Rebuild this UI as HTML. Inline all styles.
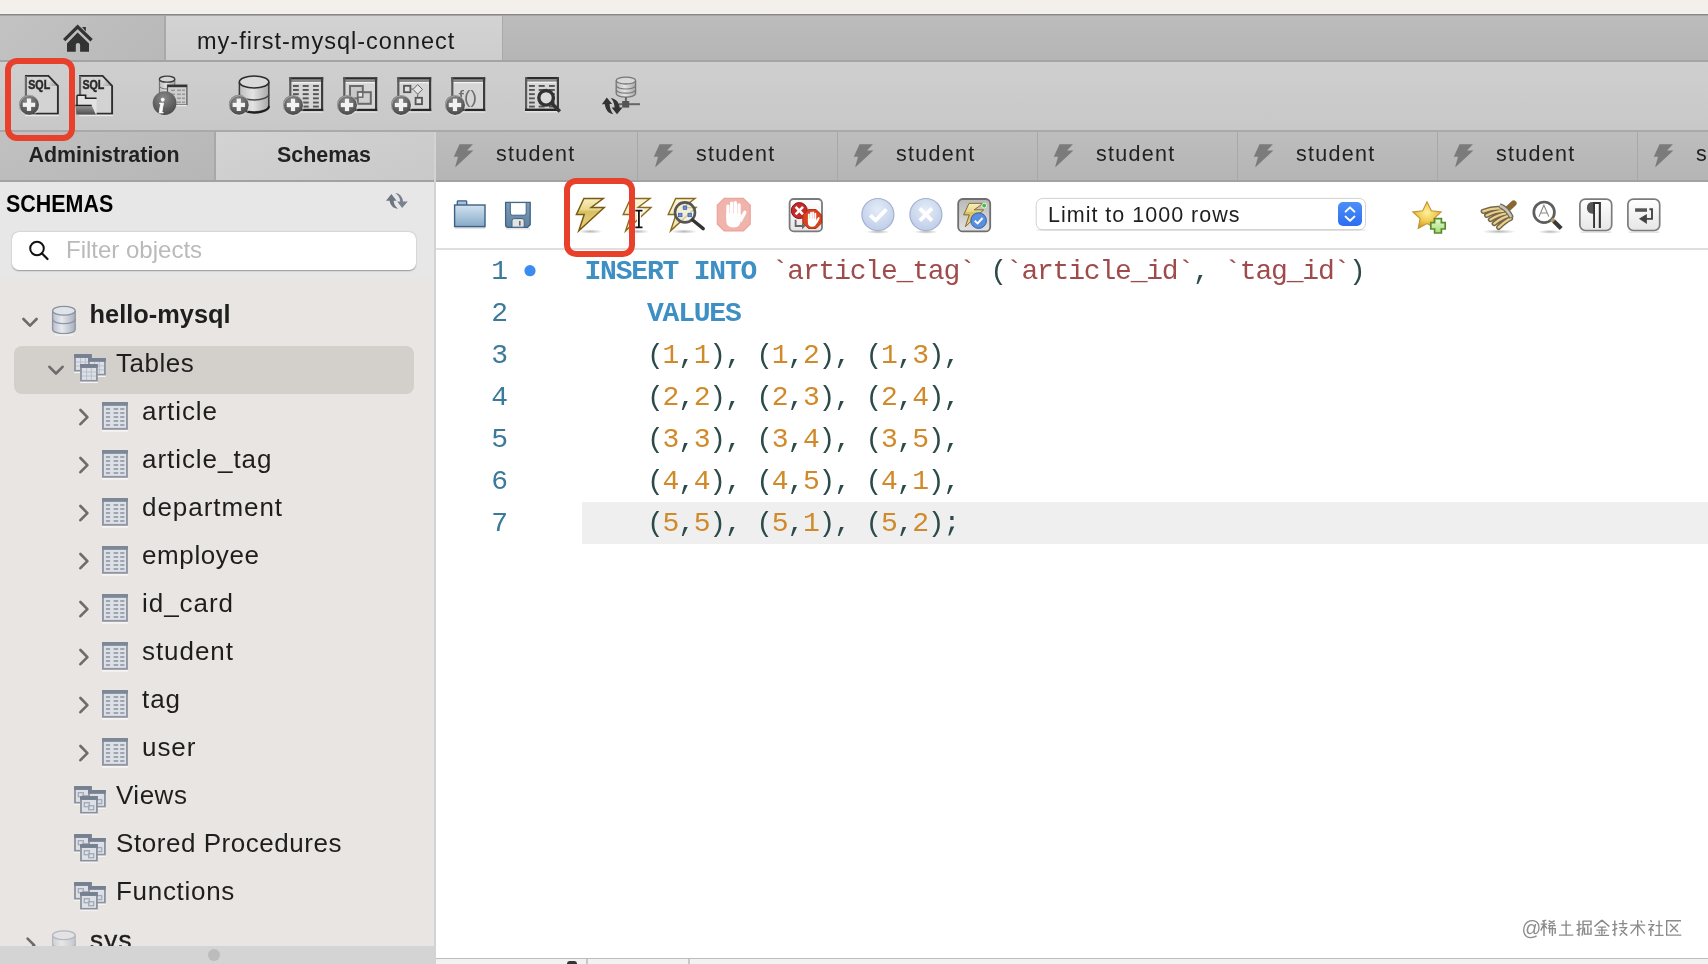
<!DOCTYPE html>
<html><head><meta charset="utf-8">
<style>
*{margin:0;padding:0;box-sizing:border-box}
html,body{width:1708px;height:964px;overflow:hidden;background:#fff;font-family:"Liberation Sans",sans-serif;color:#1f1f1f}
.a{position:absolute}
#top{left:0;top:0;width:1708px;height:14px;background:linear-gradient(#f3f0eb 92%,#f9f7f3)}
#l1{left:0;top:14px;width:1708px;height:2px;background:linear-gradient(#868686 50%,#a6a6a6 50%)}
#tabbar{left:0;top:16px;width:1708px;height:44px;background:linear-gradient(#bcbcbc,#b5b5b5)}
#hometab{left:0;top:16px;width:164px;height:44px;background:linear-gradient(135deg,#c3c3c3,#b8b8b8)}
#hsep{left:164px;top:16px;width:2px;height:44px;background:#a9a9a9}
#conntab{left:166px;top:16px;width:336px;height:44px;background:linear-gradient(#d3d3d3,#cdcdcd)}
#csep{left:502px;top:16px;width:1px;height:44px;background:#a9a9a9}
#conntxt{left:197px;top:27px;line-height:28px;font-size:23.5px;letter-spacing:1px;color:#1a1a1a}
#l2{left:0;top:60px;width:1708px;height:2px;background:#a4a4a4}
#toolbar{left:0;top:62px;width:1708px;height:68px;background:linear-gradient(#cfcfcf,#c8c8c8)}
#l3{left:0;top:130px;width:1708px;height:2px;background:#a9a9a9}
#admintab{left:0;top:132px;width:214px;height:48px;background:linear-gradient(160deg,#c1c1c1,#b6b6b6)}
#asep{left:214px;top:132px;width:2px;height:48px;background:#a8a8a8}
#schtab{left:216px;top:132px;width:218px;height:48px;background:linear-gradient(160deg,#d3d3d3,#c9c9c9)}
.tabtxt{font-weight:bold;font-size:21.4px;line-height:47px;text-align:center;color:#222}
#edtabs{left:436px;top:132px;width:1272px;height:48px;background:linear-gradient(#bdbdbd,#b5b5b5)}
.etab{position:absolute;top:0;width:202px;height:48px;border-right:1.5px solid #a8a8a8}
.etab span{position:absolute;left:60px;top:0;line-height:44px;font-size:21.5px;letter-spacing:1.3px;color:#222}
.etab svg{position:absolute;left:16px;top:13px}
#l4{left:0;top:180px;width:1708px;height:2px;background:#a2a2a2}
#vsplit{left:434px;top:132px;width:2px;height:832px;background:#d3d3d3}
#lefthead{left:0;top:182px;width:434px;height:97px;background:#e7e7e7}
#schemas{left:6px;top:191px;font-weight:bold;font-size:23.7px;color:#000;transform:scaleX(0.905);transform-origin:0 0}
#filter{left:12px;top:232px;width:404px;height:38px;background:#fff;border-radius:7px;box-shadow:0 0.5px 1.5px rgba(0,0,0,.35)}
#filtxt{left:66px;top:236px;font-size:24px;color:#bababa}
#tree{left:0;top:278px;width:434px;height:668px;background:#e9e5e2}
#selrow{left:14px;top:346px;width:400px;height:48px;border-radius:8px;background:#d3cfcb}
.ti{position:absolute;font-size:26px;letter-spacing:0.95px;color:#1e1e1e;white-space:nowrap}
#hbar{left:0;top:946px;width:434px;height:18px;background:#d4d4d4}
#edtool{left:436px;top:182px;width:1272px;height:66px;background:#fff}
#l5{left:436px;top:248px;width:1272px;height:2px;background:#dfdfdf}
#editor{left:436px;top:250px;width:1272px;height:708px;background:#fff}
#curline{left:582px;top:502px;width:1126px;height:42px;background:#efefef}
.ln{position:absolute;left:436px;width:72px;text-align:right;font-family:"Liberation Mono",monospace;font-size:28px;color:#3b7a9a}
.code{position:absolute;left:584.5px;font-family:"Liberation Mono",monospace;font-size:28px;letter-spacing:-1.2px;white-space:pre;color:#2b4a4a}
.kw{color:#3d8fc4;font-weight:bold}
.st{color:#a04b4b}
.nu{color:#d08a2a}
#botline{left:436px;top:958px;width:1272px;height:1px;background:#bdbdbd}
#bot{left:436px;top:959px;width:1272px;height:5px;background:#f2f2f2}
.red{position:absolute;border:6px solid #e8412b;border-radius:12px}
</style></head><body style="will-change:transform">
<div class="a" id="top"></div>
<div class="a" id="l1"></div>
<div class="a" id="tabbar"></div>
<div class="a" id="hometab"></div>
<div class="a" id="hsep"></div>
<div class="a" id="conntab"></div>
<div class="a" id="csep"></div>
<div class="a" id="conntxt">my-first-mysql-connect</div>
<div class="a" id="l2"></div>
<div class="a" id="toolbar"></div>
<div class="a" id="l3"></div>
<div class="a" id="admintab"><div class="tabtxt" style="padding-right:6px">Administration</div></div>
<div class="a" id="asep"></div>
<div class="a" id="schtab"><div class="tabtxt" style="padding-right:2px">Schemas</div></div>
<div class="a" id="edtabs">
 <div class="etab" style="left:0px"><span>student</span></div>
 <div class="etab" style="left:200px"><span>student</span></div>
 <div class="etab" style="left:400px"><span>student</span></div>
 <div class="etab" style="left:600px"><span>student</span></div>
 <div class="etab" style="left:800px"><span>student</span></div>
 <div class="etab" style="left:1000px"><span>student</span></div>
 <div class="etab" style="left:1200px"><span>student</span></div>
</div>
<div class="a" id="l4"></div>
<div class="a" id="lefthead"></div>
<div class="a" id="schemas">SCHEMAS</div>
<div class="a" id="filter"></div>
<div class="a" id="filtxt">Filter objects</div>
<div class="a" id="tree"></div>
<div class="a" id="selrow"></div>
<div class="ti" style="left:90px;top:298px;font-weight:bold;font-size:25.4px;letter-spacing:0;left:89.5px;top:300px">hello-mysql</div>
<div class="ti" style="left:116px;top:348px;letter-spacing:0.5px">Tables</div>
<div class="ti" style="left:142px;top:396px">article</div>
<div class="ti" style="left:142px;top:444px">article_tag</div>
<div class="ti" style="left:142px;top:492px">department</div>
<div class="ti" style="left:142px;top:540px;letter-spacing:0.6px">employee</div>
<div class="ti" style="left:142px;top:588px">id_card</div>
<div class="ti" style="left:142px;top:636px">student</div>
<div class="ti" style="left:142px;top:684px">tag</div>
<div class="ti" style="left:142px;top:732px">user</div>
<div class="ti" style="left:116px;top:780px;letter-spacing:0.5px">Views</div>
<div class="ti" style="left:116px;top:828px;letter-spacing:0.55px">Stored Procedures</div>
<div class="ti" style="left:116px;top:876px;letter-spacing:0.7px">Functions</div>
<div class="ti" style="left:90px;top:925px;letter-spacing:1.2px;-webkit-text-stroke:0.4px #1e1e1e">sys</div>
<div class="a" id="hbar"></div>
<div class="a" id="vsplit"></div>
<div class="a" id="edtool"></div>
<div class="a" id="l5"></div>
<div class="a" id="editor"></div>
<div class="a" id="curline"></div>
<div class="ln" style="top:256px">1</div>
<div class="ln" style="top:298px">2</div>
<div class="ln" style="top:340px">3</div>
<div class="ln" style="top:382px">4</div>
<div class="ln" style="top:424px">5</div>
<div class="ln" style="top:466px">6</div>
<div class="ln" style="top:508px">7</div>
<div class="code" style="top:256px"><span class="kw">INSERT INTO</span> <span class="st">`article_tag`</span> (<span class="st">`article_id`</span>, <span class="st">`tag_id`</span>)</div>
<div class="code" style="top:298px">    <span class="kw">VALUES</span></div>
<div class="code" style="top:340px">    (<span class="nu">1</span>,<span class="nu">1</span>), (<span class="nu">1</span>,<span class="nu">2</span>), (<span class="nu">1</span>,<span class="nu">3</span>),</div>
<div class="code" style="top:382px">    (<span class="nu">2</span>,<span class="nu">2</span>), (<span class="nu">2</span>,<span class="nu">3</span>), (<span class="nu">2</span>,<span class="nu">4</span>),</div>
<div class="code" style="top:424px">    (<span class="nu">3</span>,<span class="nu">3</span>), (<span class="nu">3</span>,<span class="nu">4</span>), (<span class="nu">3</span>,<span class="nu">5</span>),</div>
<div class="code" style="top:466px">    (<span class="nu">4</span>,<span class="nu">4</span>), (<span class="nu">4</span>,<span class="nu">5</span>), (<span class="nu">4</span>,<span class="nu">1</span>),</div>
<div class="code" style="top:508px">    (<span class="nu">5</span>,<span class="nu">5</span>), (<span class="nu">5</span>,<span class="nu">1</span>), (<span class="nu">5</span>,<span class="nu">2</span>);</div>
<div class="a" id="botline"></div>
<div class="a" id="bot"></div>
<div class="a" style="left:586px;top:959px;width:2px;height:5px;background:#c8c8c8"></div>
<div class="a" style="left:688px;top:959px;width:2px;height:5px;background:#c8c8c8"></div>
<div class="a" style="left:567px;top:961px;width:10px;height:6px;border-radius:5px;background:#333"></div>
<div class="a" style="left:208px;top:949px;width:12px;height:12px;border-radius:6px;background:#bcbcbc"></div>
<svg class="a" style="left:0;top:0" width="1708" height="964" viewBox="0 0 1708 964">
<defs>
 <radialGradient id="gPlus" cx="0.45" cy="0.3" r="0.7"><stop offset="0" stop-color="#8a8a8a"/><stop offset="1" stop-color="#4a4a4a"/></radialGradient>
 <linearGradient id="gCyl" x1="0" y1="0" x2="1" y2="0"><stop offset="0" stop-color="#bdbdbd"/><stop offset="0.45" stop-color="#e4e4e4"/><stop offset="1" stop-color="#a8a8a8"/></linearGradient>
 <linearGradient id="gFold" x1="0" y1="0" x2="1" y2="1"><stop offset="0" stop-color="#f0f0f0"/><stop offset="1" stop-color="#9a9a9a"/></linearGradient>
 <g id="plus"><circle r="10" fill="url(#gPlus)"/><circle r="10" fill="none" stroke="#e6e6e6" stroke-opacity=".5" stroke-width="1" transform="translate(0.6,0.8)"/><rect x="-6.2" y="-2" width="12.4" height="4.2" fill="#f2f2f2"/><rect x="-2.1" y="-6.2" width="4.2" height="12.4" fill="#f2f2f2"/></g>
 <g id="win"><rect x="0" y="0" width="34" height="34" fill="#d6d6d6"/><rect x="0" y="0" width="34" height="2.4" fill="#2c2c2c"/><rect x="0" y="2.4" width="34" height="2.4" fill="#8a8a8a"/><rect x="2.4" y="4.8" width="29.2" height="1.3" fill="#f1f1f1"/><rect x="0" y="0" width="2.2" height="34" fill="#5a5a5a"/><rect x="31.8" y="0" width="2.2" height="34" fill="#3c3c3c"/><rect x="0" y="31.6" width="34" height="2.4" fill="#262626"/><rect x="0" y="34" width="34" height="1.5" fill="#e8e8e8" opacity=".8"/></g>
 <g id="sqldoc"><path d="M0,0 H23.6 L33.8,10.7 V39.5 H0 Z" fill="#d3d3d3"/><path d="M23.6,1.2 V11 H33" fill="url(#gFold)"/><path d="M0.9,39.5 V0.9 H23.4 L32.9,10.9 V38.6 H0.9" fill="none" stroke="#2e2e2e" stroke-width="1.9"/><path d="M0.9,1 V39" stroke="#6a6a6a" stroke-width="2"/><rect x="0" y="39.8" width="34" height="1.4" fill="#eaeaea"/><text x="3.2" y="13.8" font-family="Liberation Sans" font-weight="bold" font-size="13.5" fill="#2a2a2a" stroke="#2a2a2a" stroke-width=".5" textLength="22" lengthAdjust="spacingAndGlyphs">SQL</text></g>
 <g id="tdash"><rect x="0" y="0" width="5.8" height="1.9"/><rect x="9.7" y="0" width="6" height="1.9"/><rect x="20" y="0" width="5.8" height="1.9"/></g>
</defs>
<!-- home -->
<path d="M64.2,40.2 L77.6,26.8 L91.6,40.2" fill="none" stroke="#333" stroke-width="3.3" stroke-linejoin="miter"/>
<path d="M82,26.9 H85.9 V31.6 Z" fill="#333"/>
<path d="M77.6,32.6 L89,43.4 V51.8 H80.1 V44.8 Q80.1,42.9 77.95,42.9 Q75.8,42.9 75.8,44.8 V51.8 H67 V43.4 Z" fill="#333"/>
<!-- toolbar icon 1: new sql -->
<use href="#sqldoc" x="25" y="75"/>
<use href="#plus" x="29" y="104.7"/>
<!-- icon 2: open sql -->
<use href="#sqldoc" x="79.2" y="75"/>
<path d="M77,95.5 H85.8 V98.2 H96.6 V114.5 H77 Z" fill="#e2e2e2"/>
<path d="M77,95.3 H85.6 V98.2 H96.6" fill="none" stroke="#222" stroke-width="1.6"/>
<path d="M77,95.3 V105" stroke="#333" stroke-width="1.6"/>
<defs><linearGradient id="gFld" x1="0" y1="0" x2="0" y2="1"><stop offset="0" stop-color="#9a9a9a"/><stop offset="1" stop-color="#4d4d4d"/></linearGradient></defs>
<path d="M75.4,105.4 H91.7 L95.8,114.6 H76.4 Z" fill="url(#gFld)"/>
<path d="M75.4,105.4 H91.7" stroke="#222" stroke-width="1.4"/>
<!-- icon 3: info -->
<path d="M159.4,79 V98 A7.7,3 0 0 0 174.8,98 V79" fill="url(#gCyl)" stroke="#6a6a6a" stroke-width="1"/>
<ellipse cx="167.1" cy="79.2" rx="7.7" ry="3" fill="#d6d6d6" stroke="#3c3c3c" stroke-width="1.3"/>
<path d="M159.4,86 A7.7,3 0 0 0 174.8,86 M159.4,92 A7.7,3 0 0 0 174.8,92" fill="none" stroke="#777" stroke-width="1"/>
<rect x="167.5" y="85" width="19.4" height="19.8" fill="#cfcfcf" stroke="#555" stroke-width="1.2"/>
<rect x="167.5" y="85" width="19.4" height="2.2" fill="#333"/>
<g fill="#9a9a9a"><rect x="171" y="89.5" width="4" height="1.6"/><rect x="177" y="89.5" width="4" height="1.6"/><rect x="182" y="89.5" width="3" height="1.6"/>
<rect x="171" y="93.5" width="4" height="1.6"/><rect x="177" y="93.5" width="4" height="1.6"/><rect x="182" y="93.5" width="3" height="1.6"/>
<rect x="177" y="97.5" width="4" height="1.6"/><rect x="182" y="97.5" width="3" height="1.6"/>
<rect x="177" y="101.5" width="4" height="1.6"/><rect x="182" y="101.5" width="3" height="1.6"/></g>
<rect x="167.5" y="104.8" width="19.4" height="1.4" fill="#eaeaea"/>
<circle cx="164.6" cy="103.1" r="11.9" fill="url(#gPlus)"/>
<text x="158.4" y="112.6" font-family="Liberation Serif" font-style="italic" font-weight="bold" font-size="21" fill="#fafafa" stroke="#fafafa" stroke-width=".6">i</text>
<!-- icon 4: new schema -->
<path d="M239.4,82 V106 A14.7,6 0 0 0 268.8,106 V82" fill="url(#gCyl)" stroke="#3a3a3a" stroke-width="1.5"/>
<ellipse cx="254.1" cy="82" rx="14.7" ry="6" fill="#d9d9d9" stroke="#2c2c2c" stroke-width="1.6"/>
<path d="M239.4,94 A14.7,6 0 0 0 268.8,94" fill="none" stroke="#4a4a4a" stroke-width="1.5"/>
<path d="M268.8,106 A14.7,6 0 0 1 246,111.6" fill="none" stroke="#1e1e1e" stroke-width="2"/>
<use href="#plus" x="238.8" y="104.8"/>
<!-- icons 5-8 windows -->
<use href="#win" x="289.2" y="77.2"/>
<g fill="#555"><use href="#tdash" x="293" y="85"/><use href="#tdash" x="293" y="89"/><use href="#tdash" x="293" y="93.2"/><use href="#tdash" x="293" y="97.4"/><use href="#tdash" x="293" y="101.6"/><use href="#tdash" x="293" y="105.6"/></g>
<use href="#plus" x="293" y="104.9"/>
<use href="#win" x="343.2" y="77.2"/>
<rect x="350" y="86" width="12.8" height="12.5" fill="#c8c8c8" stroke="#6a6a6a" stroke-width="2"/>
<rect x="357.8" y="92.2" width="13" height="11.6" fill="#cfcfcf" stroke="#6a6a6a" stroke-width="2"/>
<rect x="357.8" y="92.2" width="5" height="5" fill="#e8e8e8" stroke="#6a6a6a" stroke-width="1.5"/>
<use href="#plus" x="347" y="104.9"/>
<use href="#win" x="397.2" y="77.2"/>
<rect x="404" y="85.8" width="6.4" height="6.4" fill="#e0e0e0" stroke="#555" stroke-width="1.8"/>
<path d="M417.7,84.6 L422.4,89.4 L417.7,94.2 L413,89.4 Z" fill="#e6e6e6" stroke="#666" stroke-width="1"/>
<path d="M410.4,89 H413 M417.7,94.2 V97.2" stroke="#5a7a7a" stroke-width="1.2"/>
<rect x="415.6" y="97.8" width="6.4" height="6.4" fill="#e0e0e0" stroke="#555" stroke-width="1.8"/>
<use href="#plus" x="401" y="104.9"/>
<use href="#win" x="451.2" y="77.2"/>
<text x="458.6" y="103.4" font-family="Liberation Sans" font-size="18.5" fill="#6e6e6e" textLength="18.5" lengthAdjust="spacingAndGlyphs">f()</text>
<use href="#plus" x="455" y="104.9"/>
<!-- icon 9 search -->
<use href="#win" x="525" y="77"/>
<g fill="#555"><use href="#tdash" x="529" y="85"/><use href="#tdash" x="529" y="89"/><use href="#tdash" x="529" y="93.2"/><use href="#tdash" x="529" y="97.4"/><use href="#tdash" x="529" y="101.6"/><use href="#tdash" x="529" y="105.6"/></g>
<circle cx="546.1" cy="97.8" r="7.3" fill="#dcdcdc" stroke="#333" stroke-width="3.4"/>
<path d="M551.6,103.3 L559.8,111.6" stroke="#333" stroke-width="3.6"/>
<!-- icon 10 reconnect -->
<path d="M616.2,80.6 V93.5 A9.7,3.6 0 0 0 635.6,93.5 V80.6" fill="url(#gCyl)" stroke="#777" stroke-width="1.3"/>
<ellipse cx="625.9" cy="80.6" rx="9.7" ry="3.4" fill="#d8d8d8" stroke="#777" stroke-width="1.3"/>
<path d="M616.2,85.6 A9.7,3.4 0 0 0 635.6,85.6 M616.2,89.8 A9.7,3.4 0 0 0 635.6,89.8" fill="none" stroke="#777" stroke-width="1.2"/>
<path d="M625.9,97 V101" stroke="#666" stroke-width="2"/>
<path d="M619,104.2 H640" stroke="#666" stroke-width="2"/>
<rect x="622.2" y="101" width="7" height="6.6" fill="#555"/>
<path d="M601.9,104.3 L606.8,97.4 L612.1,104 H609.6 C609.8,108.3 611,111.3 613.2,114.2 C608.2,113.6 605.4,109.6 604.9,104.3 Z" fill="#333"/>
<path d="M610.8,98 C616.4,99 619.3,102.6 619.7,107.6 H622.6 L617,114.3 L611.6,107.6 H614.6 C614.4,103.6 613.2,100.6 610.8,98 Z" fill="#333"/>
</svg>

<svg class="a" style="left:0;top:0" width="1708" height="964" viewBox="0 0 1708 964">
<defs>
 <path id="tbolt" d="M459.5,144.2 H472.9 L467,150.5 H473.4 L456.2,166.6 Q455,167.4 455.3,166.2 L458.1,156.7 H453.8 Z" fill="#7b7b7b"/>
 <linearGradient id="gBolt" x1="0" y1="0" x2="0" y2="1"><stop offset="0" stop-color="#f7efc0"/><stop offset="0.35" stop-color="#e8d78a"/><stop offset="0.4" stop-color="#d9c060"/><stop offset="1" stop-color="#e6d48a"/></linearGradient>
 <linearGradient id="gBoltP" x1="0" y1="0" x2="0" y2="1"><stop offset="0" stop-color="#fbf5d8"/><stop offset="1" stop-color="#efe3b0"/></linearGradient>
 <path id="bolt" d="M7.7,0.5 H27 L15,9.5 H28 L2.6,32.8 L8,16.5 H0.2 Z"/>
 <radialGradient id="gShadow" cx="0.5" cy="0.5" r="0.5"><stop offset="0" stop-color="#000" stop-opacity=".28"/><stop offset="1" stop-color="#000" stop-opacity="0"/></radialGradient>
 <linearGradient id="gFolder" x1="0" y1="0" x2="0" y2="1"><stop offset="0" stop-color="#d2e3f1"/><stop offset="1" stop-color="#86a9c8"/></linearGradient>
 <linearGradient id="gSave" x1="0" y1="0" x2="0" y2="1"><stop offset="0" stop-color="#7f9db8"/><stop offset="1" stop-color="#5f819f"/></linearGradient>
 <radialGradient id="gBlueC" cx="0.5" cy="0.35" r="0.7"><stop offset="0" stop-color="#e4ecf8"/><stop offset="1" stop-color="#bccbe6"/></radialGradient>
 <linearGradient id="gStep" x1="0" y1="0" x2="0" y2="1"><stop offset="0" stop-color="#4c8ff8"/><stop offset="1" stop-color="#2c6ef0"/></linearGradient>
 <linearGradient id="gBtn" x1="0" y1="0" x2="0" y2="1"><stop offset="0" stop-color="#ffffff"/><stop offset="1" stop-color="#e6e6e6"/></linearGradient>
 <linearGradient id="gBtnD" x1="0" y1="0" x2="0" y2="1"><stop offset="0" stop-color="#b8b8b8"/><stop offset="1" stop-color="#e2e2e2"/></linearGradient>
 <radialGradient id="gStar" cx="0.5" cy="0.4" r="0.6"><stop offset="0" stop-color="#fff1a0"/><stop offset="0.6" stop-color="#f0c84a"/><stop offset="1" stop-color="#c9962a"/></radialGradient>
<g id="hand" fill="#fff"><rect x="726.3" y="204.5" width="3.3" height="14" rx="1.6"/><rect x="730" y="201.6" width="3.3" height="16" rx="1.6"/><rect x="733.7" y="201" width="3.3" height="16" rx="1.6"/><rect x="737.4" y="203.2" width="3.3" height="14" rx="1.6"/><path d="M739,219.5 L743.2,211.8 Q744.6,209.8 746,211 Q747,212.2 746,214 L741.4,222.4 Z"/><path d="M726.3,213.5 H740.7 V220 Q740.7,227.4 733.4,227.4 Q726.3,227.4 726.3,221 Z"/></g>
</defs>
<!-- editor tab bolts -->
<use href="#tbolt"/><use href="#tbolt" x="200"/><use href="#tbolt" x="400"/><use href="#tbolt" x="600"/><use href="#tbolt" x="800"/><use href="#tbolt" x="1000"/><use href="#tbolt" x="1200"/>
<!-- refresh -->
<path d="M386,200.8 L391.4,194 L396.6,200.8 H393.6 C393.8,204 395.4,206.6 398,208.8 C393.6,208.6 390.2,205.6 389.6,200.8 Z" fill="#6e7684"/>
<path d="M395.3,193 C400,193.4 402.6,197 403,201.4 H407.8 L402.1,208 L397.2,201.4 H400.2 C400,197.8 398.2,195 395.3,193 Z" fill="#7a8290"/>
<!-- filter magnifier -->
<circle cx="37" cy="248.5" r="6.8" fill="none" stroke="#111" stroke-width="2"/>
<path d="M41.8,253.3 L47.5,259" stroke="#111" stroke-width="2.2" stroke-linecap="round"/>
<!-- folder -->
<path d="M457.3,205 V201.6 Q457.3,200.8 458.1,200.8 H465.9 Q466.7,200.8 466.7,201.6 V205" fill="#a8c2d8" stroke="#3d6084" stroke-width="1.3"/>
<rect x="454.6" y="205" width="30.4" height="21.6" fill="url(#gFolder)" stroke="#3d6084" stroke-width="1.4"/>
<rect x="455" y="227.3" width="30" height="1.6" fill="#000" opacity=".12"/>
<!-- save -->
<path d="M505.6,202.4 H530.2 V224.8 L527.6,227.4 H508.2 Q505.6,227.4 505.6,224.8 Z" fill="url(#gSave)" stroke="#3f6385" stroke-width="1.3"/>
<path d="M510.3,202.6 V213 Q510.3,215.2 512.5,215.2 H524 Q526.2,215.2 526.2,213 V202.6 Z" fill="#fff" stroke="#3f6385" stroke-width="1"/>
<path d="M512,227.2 V220.8 Q512,218.6 514.2,218.6 H522 Q524.2,218.6 524.2,220.8 V227.2 Z" fill="#e4e4e4" stroke="#3f6385" stroke-width="1"/>
<rect x="519" y="221" width="1.6" height="4.6" fill="#6a6a6a"/>
<rect x="506" y="228" width="24" height="1.5" fill="#000" opacity=".1"/>
<!-- bolt 1 -->
<ellipse cx="590.5" cy="231.5" rx="12" ry="2.2" fill="url(#gShadow)"/>
<use href="#bolt" x="576.2" y="198" fill="url(#gBolt)" stroke="#7a5a12" stroke-width="1.5" stroke-linejoin="miter"/>
<!-- bolt 2 w cursor -->
<ellipse cx="637.5" cy="231.5" rx="12" ry="2.2" fill="url(#gShadow)"/>
<use href="#bolt" x="623" y="198" fill="url(#gBoltP)" stroke="#8a6a1a" stroke-width="1.4"/>
<path d="M635.3,210.6 H642.5 M638.9,210.6 V227.4 M635.3,227.4 H642.5" stroke="#fff" stroke-width="4" stroke-linecap="round"/>
<path d="M635.3,210.6 H642.5 M638.9,210.6 V227.4 M635.3,227.4 H642.5" stroke="#111" stroke-width="1.8"/>
<!-- bolt 3 w magnifier -->
<ellipse cx="684" cy="231.5" rx="13" ry="2.2" fill="url(#gShadow)"/>
<use href="#bolt" x="668" y="198" fill="url(#gBoltP)" stroke="#8a6a1a" stroke-width="1.4"/>
<circle cx="685" cy="212.4" r="10" fill="#f4efd8" fill-opacity=".7" stroke="#555" stroke-width="2.6"/>
<g fill="#6d8fd0" stroke="#3a64b8" stroke-width=".8"><rect x="683.3" y="206" width="3.4" height="3.4"/><rect x="678.6" y="213.3" width="3.4" height="3.4"/><rect x="688" y="213.3" width="3.4" height="3.4"/></g>
<path d="M692.6,220 L703.2,228.6" stroke="#333" stroke-width="3.4" stroke-linecap="round"/>
<!-- stop -->
<path d="M724.2,198.3 H743.3 L750.2,205.2 V224 L743.3,230.9 H724.2 L717.3,224 V205.2 Z" fill="#f1b4ad" stroke="#eaa39b" stroke-width="1.2"/>
<use href="#hand"/>
<!-- stop on error toggle -->
<rect x="789.6" y="199" width="32.4" height="32.4" rx="4.2" fill="url(#gBtn)" stroke="#7a7a7a" stroke-width="1.8"/>
<circle cx="799.3" cy="210.6" r="8" fill="#c42a2a" stroke="#8a1515" stroke-width="1"/>
<path d="M795.6,206.9 L803,214.3 M803,206.9 L795.6,214.3" stroke="#fff" stroke-width="2.6"/>
<path d="M808.3,209.6 H816.1 L821.6,215.1 V222.9 L816.1,228.4 H808.3 L802.8,222.9 V215.1 Z" fill="#d9441f" stroke="#a8300f" stroke-width="1"/>
<use href="#hand" transform="translate(812.2,219.4) scale(0.58) translate(-733.7,-214.6)"/>
<path d="M795.6,219.8 V226 H802.5" fill="none" stroke="#666" stroke-width="1.8"/>
<path d="M802,222.8 L805.4,226 L802,229.2 Z" fill="#666"/>
<!-- commit / rollback -->
<ellipse cx="878" cy="231.8" rx="12" ry="2" fill="url(#gShadow)"/>
<circle cx="877.9" cy="214.5" r="16" fill="url(#gBlueC)" stroke="#a3b2d0" stroke-width="1.2"/>
<path d="M870.2,215.2 L875.6,220.4 L886.4,209.2" fill="none" stroke="#fff" stroke-width="3.8" stroke-linejoin="round"/>
<ellipse cx="926" cy="231.8" rx="12" ry="2" fill="url(#gShadow)"/>
<circle cx="925.9" cy="214.5" r="16" fill="url(#gBlueC)" stroke="#a3b2d0" stroke-width="1.2"/>
<path d="M919.8,208.4 L932,220.6 M932,208.4 L919.8,220.6" stroke="#fff" stroke-width="3.8"/>
<!-- autocommit -->
<rect x="958.2" y="199" width="32" height="32.4" rx="4.5" fill="url(#gBtnD)" stroke="#6e6e6e" stroke-width="1.8"/>
<use href="#bolt" x="963.5" y="203" fill="url(#gBolt)" stroke="#7a5a12" stroke-width="1.2" transform="translate(963.5,203) scale(0.72) translate(-963.5,-203)"/>
<circle cx="978.6" cy="220.6" r="7.8" fill="#5a8fe0" stroke="#2f5fae" stroke-width="1"/>
<path d="M974.8,220.8 L977.6,223.4 L982.6,218" fill="none" stroke="#fff" stroke-width="1.9"/>
<circle cx="984.2" cy="205.6" r="2.4" fill="#3fbf3a" stroke="#fff" stroke-width=".8"/>
<!-- limit select -->
<rect x="1036.2" y="198.4" width="329.4" height="31.4" rx="6.5" fill="#fff" stroke="#d2d2d2" stroke-width="1"/>
<rect x="1036.4" y="229.6" width="329" height="1" fill="#000" opacity=".12"/>
<rect x="1338" y="202" width="24" height="24" rx="5" fill="url(#gStep)"/>
<path d="M1345.6,211.6 L1350,207.4 L1354.4,211.6 M1345.6,216.6 L1350,220.8 L1354.4,216.6" fill="none" stroke="#fff" stroke-width="2" stroke-linecap="round" stroke-linejoin="round"/>
<!-- star plus -->
<path d="M1427,201.8 L1431.3,210.7 L1441.2,211.9 L1433.9,218.6 L1435.8,228.4 L1427,223.6 L1418.2,228.4 L1420.1,218.6 L1412.8,211.9 L1422.7,210.7 Z" fill="url(#gStar)" stroke="#c39434" stroke-width="1.1"/>
<defs><linearGradient id="gGreen" x1="0" y1="0" x2="0" y2="1"><stop offset="0" stop-color="#e6fad6"/><stop offset="1" stop-color="#a4dc74"/></linearGradient></defs><path d="M1434.6,218.6 H1441.4 V222.6 H1445.2 V229 H1441.4 V233 H1434.6 V229 H1430.8 V222.6 H1434.6 Z" fill="url(#gGreen)" stroke="#5b8a2e" stroke-width="1.7"/>
<!-- broom -->
<ellipse cx="1499" cy="231.6" rx="17" ry="2.2" fill="url(#gShadow)"/>
<path d="M1508,208.6 L1513.6,203.4" stroke="#8a6630" stroke-width="6" stroke-linecap="round"/>
<path d="M1500.6,208.6 Q1492.7,207.8 1483.2,211.4 M1503.1,211.0 Q1495.6,211.0 1486.6,215.4 M1505.6,213.5 Q1498.8,214.4 1490.4,219.6 M1508.1,215.9 Q1502.0,217.6 1494.2,223.6 M1510.6,218.4 Q1505.4,220.7 1498.6,227.4" fill="none" stroke="#75674a" stroke-width="5.2" stroke-linecap="round"/>
<path d="M1500.6,208.6 Q1492.7,207.8 1483.2,211.4 M1503.1,211.0 Q1495.6,211.0 1486.6,215.4 M1505.6,213.5 Q1498.8,214.4 1490.4,219.6 M1508.1,215.9 Q1502.0,217.6 1494.2,223.6 M1510.6,218.4 Q1505.4,220.7 1498.6,227.4" fill="none" stroke="#ecd08e" stroke-width="2.2" stroke-linecap="round"/>
<path d="M1499.6,205.6 Q1507,208 1511.6,217.6" fill="none" stroke="#6e6a5e" stroke-width="5"/>
<path d="M1499.8,205.8 Q1506.8,208.4 1511.2,217" fill="none" stroke="#c9c3b2" stroke-width="2.6"/>
<!-- find -->
<ellipse cx="1550" cy="231.8" rx="12" ry="2" fill="url(#gShadow)"/>
<circle cx="1544.1" cy="212.3" r="10.3" fill="#fff" stroke="#5e5e5e" stroke-width="2.7"/>
<path d="M1539,216.6 L1543.9,205.2 L1548.8,216.6 M1540.6,213 H1547.2" fill="none" stroke="#8a8a8a" stroke-width="1.1"/>
<path d="M1553.6,221 L1561.2,228.4" stroke="#3a3a3a" stroke-width="4.2"/>
<path d="M1551.6,219.2 L1553.8,221.3" stroke="#b09a68" stroke-width="4"/>
<!-- pilcrow -->
<rect x="1579.9" y="199.1" width="31.8" height="31.4" rx="5.4" fill="url(#gBtn)" stroke="#7c7c7c" stroke-width="1.7"/>
<rect x="1580.5" y="231.2" width="31" height="1.8" rx=".9" fill="#000" opacity=".1"/>
<path d="M1595,202.1 V213.7 H1592.6 Q1586.9,213.2 1586.9,207.9 Q1586.9,202.1 1593,202.1 Z" fill="#555"/>
<path d="M1594,202.1 H1600.9 V227.9 H1598.8 V204.1 H1595 V227.9 H1593.1 V202.1 Z" fill="#333"/>
<!-- wrap -->
<rect x="1627.9" y="199.1" width="31.8" height="31.4" rx="5.4" fill="url(#gBtn)" stroke="#7c7c7c" stroke-width="1.7"/>
<rect x="1628.5" y="231.2" width="31" height="1.8" rx=".9" fill="#000" opacity=".1"/>
<rect x="1635.1" y="208.3" width="11.9" height="3.5" fill="#555"/>
<path d="M1649.4,209.2 H1652 V218.9 H1646" fill="none" stroke="#444" stroke-width="1.9"/>
<path d="M1638.9,218.8 L1646.9,214.1 V223.9 Z" fill="#444"/>
<!-- gutter dot -->
<circle cx="530" cy="270.7" r="5.6" fill="#3b8bf0"/>
</svg>

<svg class="a" style="left:0;top:0" width="1708" height="964" viewBox="0 0 1708 964">
<defs>
<linearGradient id="gDb" x1="0" y1="0" x2="1" y2="0"><stop offset="0" stop-color="#b9bfca"/><stop offset="0.4" stop-color="#e6e9ef"/><stop offset="1" stop-color="#a9b0bc"/></linearGradient>
<g id="mwin"><rect x="0" y="0" width="17.7" height="17.6" fill="#8a92a0"/><rect x="0" y="0" width="17.7" height="3.7" fill="#778090"/><rect x="1.8" y="3.9" width="14.1" height="11.9" fill="#dde0e7"/><path d="M6.5,3.9 V15.8 M11.2,3.9 V15.8 M1.8,7.9 H15.9 M1.8,11.9 H15.9" stroke="#b9bfc9" stroke-width="1"/><rect x="0" y="17.6" width="17.7" height="1.4" fill="#f6f4f2"/></g>
<g id="mwin2"><rect x="0" y="0" width="17.7" height="17.6" fill="#8a92a0"/><rect x="0" y="0" width="17.7" height="3.7" fill="#778090"/><rect x="1.8" y="3.9" width="14.1" height="11.9" fill="#dde0e7"/><rect x="4.2" y="6.6" width="5" height="4" fill="none" stroke="#a3aab5" stroke-width="1.3"/><rect x="8.6" y="9.6" width="5" height="4" fill="none" stroke="#a3aab5" stroke-width="1.3"/><rect x="0" y="17.6" width="17.7" height="1.4" fill="#f6f4f2"/></g>
<g id="tbl"><rect x="0" y="0" width="25.9" height="27.9" fill="#8e96a3"/><rect x="0" y="0" width="25.9" height="3.6" fill="#7e8796"/><rect x="1.9" y="3.9" width="22.1" height="22" fill="#dde0e6"/>
<g fill="#8e96a3"><rect x="3.9" y="6.2" width="4.2" height="1.6"/><rect x="11.6" y="6.2" width="4.6" height="1.6"/><rect x="18.2" y="6.2" width="4.2" height="1.6"/>
<rect x="3.9" y="10.2" width="4.2" height="1.6"/><rect x="11.6" y="10.2" width="4.6" height="1.6"/><rect x="18.2" y="10.2" width="4.2" height="1.6"/>
<rect x="3.9" y="14.2" width="4.2" height="1.6"/><rect x="11.6" y="14.2" width="4.6" height="1.6"/><rect x="18.2" y="14.2" width="4.2" height="1.6"/>
<rect x="3.9" y="18.2" width="4.2" height="1.6"/><rect x="11.6" y="18.2" width="4.6" height="1.6"/><rect x="18.2" y="18.2" width="4.2" height="1.6"/>
<rect x="3.9" y="22.2" width="4.2" height="1.6"/><rect x="11.6" y="22.2" width="4.6" height="1.6"/><rect x="18.2" y="22.2" width="4.2" height="1.6"/></g>
<rect x="0" y="27.9" width="25.9" height="1.8" fill="#f7f5f3"/></g>
<g id="db"><path d="M0.6,5 V23.6 A11.3,4.3 0 0 0 23.2,23.6 V5" fill="url(#gDb)" stroke="#8c94a2" stroke-width="1.3"/><ellipse cx="11.9" cy="5" rx="11.3" ry="4.4" fill="#dfe3ea" stroke="#8a92a0" stroke-width="1.3"/><path d="M0.6,13.5 A11.3,4.3 0 0 0 23.2,13.5" fill="none" stroke="#8e96a4" stroke-width="1.4"/><rect x="3" y="28.6" width="18" height="1.2" fill="#f7f5f3"/></g>
<clipPath id="clipTree"><rect x="0" y="278" width="434" height="668"/></clipPath>
</defs>
<g fill="none" stroke="#6c6c6c" stroke-width="2.6" stroke-linecap="round" stroke-linejoin="round">
<path d="M23.4,319 L30,325.7 L36.6,319"/>
<path d="M49.4,366.8 L56,373.5 L62.6,366.8"/>
<path d="M80.4,410 L87.4,417.1 L80.4,424.2"/>
<path d="M80.4,458 L87.4,465.1 L80.4,472.2"/>
<path d="M80.4,506 L87.4,513.1 L80.4,520.2"/>
<path d="M80.4,554 L87.4,561.1 L80.4,568.2"/>
<path d="M80.4,602 L87.4,609.1 L80.4,616.2"/>
<path d="M80.4,650 L87.4,657.1 L80.4,664.2"/>
<path d="M80.4,698 L87.4,705.1 L80.4,712.2"/>
<path d="M80.4,746 L87.4,753.1 L80.4,760.2"/>
<path d="M27.6,938.6 L34.2,945.2 L27.6,951.8" clip-path="url(#clipTree)"/>
</g>
<use href="#db" x="52" y="305.8"/>
<g opacity=".55" clip-path="url(#clipTree)"><use href="#db" x="52" y="930.2"/></g>
<use href="#tbl" x="102" y="402"/>
<use href="#tbl" x="102" y="450"/>
<use href="#tbl" x="102" y="498"/>
<use href="#tbl" x="102" y="546"/>
<use href="#tbl" x="102" y="594"/>
<use href="#tbl" x="102" y="642"/>
<use href="#tbl" x="102" y="690"/>
<use href="#tbl" x="102" y="738"/>
<use href="#mwin" x="74.1" y="354.1"/><use href="#mwin" x="88.1" y="358.0"/><use href="#mwin" x="80.1" y="364.1"/>
<use href="#mwin2" x="74.1" y="786.1"/><use href="#mwin2" x="88.1" y="790.0"/><use href="#mwin2" x="80.1" y="796.1"/>
<use href="#mwin2" x="74.1" y="834.1"/><use href="#mwin2" x="88.1" y="838.0"/><use href="#mwin2" x="80.1" y="844.1"/>
<use href="#mwin2" x="74.1" y="882.1"/><use href="#mwin2" x="88.1" y="886.0"/><use href="#mwin2" x="80.1" y="892.1"/>
</svg>
<svg class="a" style="left:0;top:0" width="1708" height="964" viewBox="0 0 1708 964">
<text x="1521.4" y="934.6" font-family="Liberation Sans" font-size="19.5" fill="#8c8c8c">@</text>
<path transform="translate(1540.2,919.6)" d="M2,1.5 L6,0.5 M0.5,4.5 H7 M3.8,1 V16.5 M3.6,5 L0.5,11 M4,5.5 L7,9 M8.5,1 L14.5,4.5 M14.5,1 L8.5,4.5 M8,6 H15.5 M10,6 L8.5,9.5 M9.5,9 V14 M9.5,9 H15 V13.5 H14 M12.2,7 V16.5" fill="none" stroke="#fff" stroke-width="2.6" stroke-opacity=".7"/>
<path transform="translate(1540.2,919.6)" d="M2,1.5 L6,0.5 M0.5,4.5 H7 M3.8,1 V16.5 M3.6,5 L0.5,11 M4,5.5 L7,9 M8.5,1 L14.5,4.5 M14.5,1 L8.5,4.5 M8,6 H15.5 M10,6 L8.5,9.5 M9.5,9 V14 M9.5,9 H15 V13.5 H14 M12.2,7 V16.5" fill="none" stroke="#8a8a8a" stroke-width="1.4"/>
<path transform="translate(1558.1,919.6)" d="M3,5.5 H13 M8,1 V15 M0.8,15.5 H15.2" fill="none" stroke="#fff" stroke-width="2.6" stroke-opacity=".7"/>
<path transform="translate(1558.1,919.6)" d="M3,5.5 H13 M8,1 V15 M0.8,15.5 H15.2" fill="none" stroke="#8a8a8a" stroke-width="1.4"/>
<path transform="translate(1576.0,919.6)" d="M0.5,5 H5.5 M3,1 V15.5 L1.5,14.5 M0.5,11 L5.5,8.5 M6.5,1.5 H15 V5 H7 M7,1.5 V10 L6,16 M8.5,8 V14.5 H15 V8 M11.8,6 V14.5" fill="none" stroke="#fff" stroke-width="2.6" stroke-opacity=".7"/>
<path transform="translate(1576.0,919.6)" d="M0.5,5 H5.5 M3,1 V15.5 L1.5,14.5 M0.5,11 L5.5,8.5 M6.5,1.5 H15 V5 H7 M7,1.5 V10 L6,16 M8.5,8 V14.5 H15 V8 M11.8,6 V14.5" fill="none" stroke="#8a8a8a" stroke-width="1.4"/>
<path transform="translate(1593.9,919.6)" d="M8,0.5 L0.5,7 M8,0.5 L15.5,7 M4,7.5 H12 M2.5,10.5 H13.5 M8,7.5 V15.5 M5,12 L6,14 M11,12 L10,14 M0.8,15.8 H15.2" fill="none" stroke="#fff" stroke-width="2.6" stroke-opacity=".7"/>
<path transform="translate(1593.9,919.6)" d="M8,0.5 L0.5,7 M8,0.5 L15.5,7 M4,7.5 H12 M2.5,10.5 H13.5 M8,7.5 V15.5 M5,12 L6,14 M11,12 L10,14 M0.8,15.8 H15.2" fill="none" stroke="#8a8a8a" stroke-width="1.4"/>
<path transform="translate(1611.8,919.6)" d="M0.5,5 H5.5 M3,1 V15.5 L1.5,14.5 M0.5,11 L5.5,8.5 M7,4 H15.5 M11.2,0.5 V7 M7.5,8 H14.5 L8,16 M9,10.5 L15.5,16" fill="none" stroke="#fff" stroke-width="2.6" stroke-opacity=".7"/>
<path transform="translate(1611.8,919.6)" d="M0.5,5 H5.5 M3,1 V15.5 L1.5,14.5 M0.5,11 L5.5,8.5 M7,4 H15.5 M11.2,0.5 V7 M7.5,8 H14.5 L8,16 M9,10.5 L15.5,16" fill="none" stroke="#8a8a8a" stroke-width="1.4"/>
<path transform="translate(1629.7,919.6)" d="M0.5,5.5 H15.5 M8,0.5 V16.5 M7.5,6 L1,14 M8.5,6 L15,14 M11,1 L12.5,3" fill="none" stroke="#fff" stroke-width="2.6" stroke-opacity=".7"/>
<path transform="translate(1629.7,919.6)" d="M0.5,5.5 H15.5 M8,0.5 V16.5 M7.5,6 L1,14 M8.5,6 L15,14 M11,1 L12.5,3" fill="none" stroke="#8a8a8a" stroke-width="1.4"/>
<path transform="translate(1647.6,919.6)" d="M3,0.5 L4,2.5 M0.5,5 H6 L1,11 M3.2,8.5 V16.5 M3.5,9 L6,11.5 M8,6 H15 M11.5,1 V15.5 M7,15.8 H16" fill="none" stroke="#fff" stroke-width="2.6" stroke-opacity=".7"/>
<path transform="translate(1647.6,919.6)" d="M3,0.5 L4,2.5 M0.5,5 H6 L1,11 M3.2,8.5 V16.5 M3.5,9 L6,11.5 M8,6 H15 M11.5,1 V15.5 M7,15.8 H16" fill="none" stroke="#8a8a8a" stroke-width="1.4"/>
<path transform="translate(1665.5,919.6)" d="M15.5,1.2 H1.2 V15.5 H15.8 M4.5,4.5 L12.5,12.5 M12.5,4.5 L4.5,12.5" fill="none" stroke="#fff" stroke-width="2.6" stroke-opacity=".7"/>
<path transform="translate(1665.5,919.6)" d="M15.5,1.2 H1.2 V15.5 H15.8 M4.5,4.5 L12.5,12.5 M12.5,4.5 L4.5,12.5" fill="none" stroke="#8a8a8a" stroke-width="1.4"/>
</svg>
<div class="a" style="left:1048px;top:201px;font-size:21.5px;letter-spacing:1px;color:#1e1e1e;line-height:28px">Limit to 1000 rows</div>
<div class="red" style="left:5px;top:58px;width:70px;height:83px"></div>
<div class="red" style="left:564px;top:178px;width:71px;height:79px"></div>
</body></html>
